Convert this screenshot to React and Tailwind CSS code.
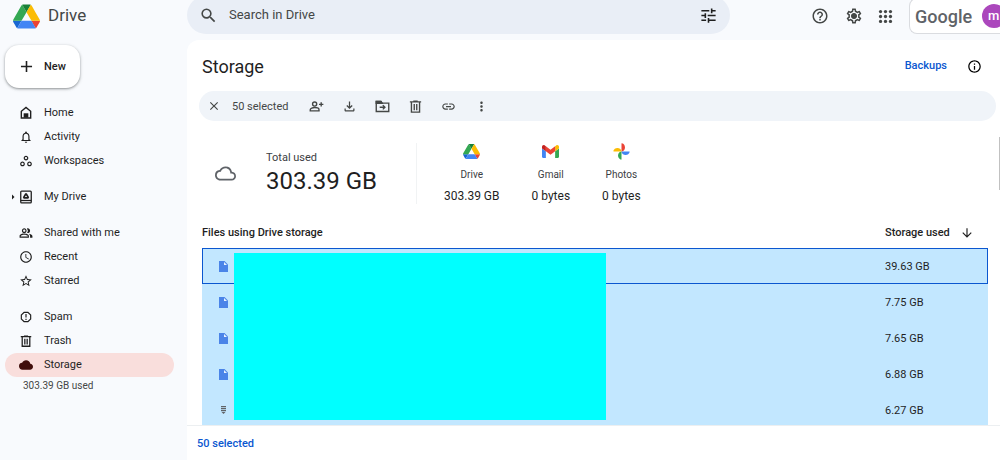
import React, { useState } from 'react';
import {
  MdAccessTime,
  MdAdd,
  MdArrowDownward,
  MdArrowRight,
  MdClose,
  MdCloud,
  MdCloudQueue,
  MdHelpOutline,
  MdInfoOutline,
  MdLink,
  MdMoreVert,
  MdNotificationsNone,
  MdOutlineFileDownload,
  MdOutlinePeopleAlt,
  MdOutlineSettings,
  MdReportGmailerrorred,
  MdSearch,
  MdStarBorder,
  MdTune,
  MdWorkspacesOutline,
} from 'react-icons/md';
import { clsx } from 'clsx';

const DriveLogo = ({ className }) => (
  <svg viewBox="0 0 87.3 78" className={className} aria-hidden="true">
    <path fill="#1967d2" d="m6.6 66.85 3.85 6.65c.8 1.4 1.95 2.5 3.3 3.3l13.75-23.8h-27.5c0 1.55.4 3.1 1.2 4.5z" />
    <path fill="#34a853" d="m43.65 25-13.75-23.8c-1.35.8-2.5 1.9-3.3 3.3l-25.4 44a9.06 9.06 0 0 0 -1.2 4.5h27.5z" />
    <path fill="#ea4335" d="m73.55 76.8c1.35-.8 2.5-1.9 3.3-3.3l1.6-2.75 7.65-13.25c.8-1.4 1.2-2.95 1.2-4.5h-27.502l5.852 11.5z" />
    <path fill="#188038" d="m43.65 25 13.75-23.8c-1.35-.8-2.9-1.2-4.5-1.2h-18.5c-1.6 0-3.15.45-4.5 1.2z" />
    <path fill="#4285f4" d="m59.8 53h-32.3l-13.75 23.8c1.35.8 2.9 1.2 4.5 1.2h50.8c1.6 0 3.15-.45 4.5-1.2z" />
    <path fill="#fbbc04" d="m73.4 26.5-12.7-22c-.8-1.4-1.95-2.5-3.3-3.3l-13.75 23.8 16.15 28h27.45c0-1.55-.4-3.1-1.2-4.5z" />
  </svg>
);

const GmailLogo = ({ className }) => (
  <svg viewBox="52 42 88 66" className={className} aria-hidden="true">
    <path fill="#4285f4" d="M58 108h14V74L52 59v43c0 3.32 2.69 6 6 6" />
    <path fill="#34a853" d="M120 108h14c3.32 0 6-2.69 6-6V59l-20 15" />
    <path fill="#fbbc04" d="M120 48v26l20-15v-8c0-7.42-8.47-11.65-14.4-7.2" />
    <path fill="#ea4335" d="M72 74V48l24 18 24-18v26L96 92" />
    <path fill="#c5221f" d="M52 51v8l20 15V48l-5.6-4.2c-5.94-4.45-14.4-.22-14.4 7.2" />
  </svg>
);

const PhotosLogo = ({ className }) => (
  <svg viewBox="0 0 24 24" className={className} aria-hidden="true">
    <path fill="#ea4335" d="M12.6 0.5a6 6 0 0 1 0 11.5H12V1.1c0-.4.2-.6.6-.6z" />
    <path fill="#4285f4" d="M23.5 12.6a6 6 0 0 1-11.5 0V12h10.9c.4 0 .6.2.6.6z" />
    <path fill="#34a853" d="M11.4 23.5a6 6 0 0 1 0-11.5H12v10.9c0 .4-.2.6-.6.6z" />
    <path fill="#fbbc04" d="M.5 11.4a6 6 0 0 1 11.5 0V12H1.1c-.4 0-.6-.2-.6-.6z" />
  </svg>
);

const HomeIcon = ({ className }) => (
  <svg viewBox="0 0 24 24" className={className} fill="none" stroke="currentColor" strokeWidth="2.4" aria-hidden="true">
    <path d="M4 20.5V9L12 2.5 20 9v11.5z" />
    <path d="M8 12.5h8V20H8z" fill="currentColor" stroke="none" />
  </svg>
);

const MyDriveIcon = ({ className }) => (
  <svg viewBox="0 0 24 24" className={className} fill="none" stroke="currentColor" strokeWidth="2.2" aria-hidden="true">
    <rect x="3" y="2" width="18" height="20" rx="1.5" />
    <path d="M3 18h18" />
    <path d="M10.6 5.5h2.8l4 7-1.4 2.5H8l-1.4-2.5zM12 8.8l-1.8 3.2h3.6z" fill="currentColor" fillRule="evenodd" stroke="none" />
  </svg>
);

const TrashIcon = ({ className }) => (
  <svg viewBox="0 0 24 24" className={className} fill="none" stroke="currentColor" strokeWidth="2.2" aria-hidden="true">
    <path d="M3 4.5h18M8.5 3.5h7M5.5 5v16h13V5M10 8v10M14 8v10" />
  </svg>
);

const AddPersonIcon = ({ className }) => (
  <svg viewBox="0 0 24 24" className={className} fill="none" stroke="currentColor" strokeWidth="2.2" aria-hidden="true">
    <circle cx="9" cy="8" r="3.3" />
    <path d="M2 19v-2c0-2.2 4-3.4 7-3.4s7 1.2 7 3.4v2zM19.5 5v7M16 8.5h7" />
  </svg>
);

const MoveIcon = ({ className }) => (
  <svg viewBox="0 0 24 24" className={className} fill="none" stroke="currentColor" strokeWidth="2.2" aria-hidden="true">
    <path d="M2 4h7.5l2 2.5H22V20H2z" />
    <path d="M2 4h7.5l2 3H2z" fill="currentColor" />
    <path d="M7.5 13.2h8M12.5 9.8l3.4 3.4-3.4 3.4" />
  </svg>
);

const SettingsIcon = ({ className }) => (
  <svg viewBox="0 0 24 24" className={className} fill="currentColor" aria-hidden="true">
    <MdOutlineSettings size={24} />
    <circle cx="12" cy="12" r="3.4" />
  </svg>
);

const AppsIcon = ({ className }) => (
  <svg viewBox="0 0 24 24" className={className} fill="currentColor" aria-hidden="true">
    {[5, 12, 19].map((y) => [5, 12, 19].map((x) => <circle key={`${x}-${y}`} cx={x} cy={y} r="2.3" />))}
  </svg>
);

const FileIcon = ({ className }) => (
  <svg viewBox="0 0 9 11" className={className} aria-hidden="true">
    <path fill="#4a84e8" d="M0 0h5.5L9 3.5V11H0z" />
    <path fill="#e8f3ff" d="M5 1v3h3z" />
  </svg>
);

const ArchiveIcon = ({ className }) => (
  <svg viewBox="0 0 6 8" className={className} aria-hidden="true">
    <path fill="#5f6368" d="M.5 0h5v1.2h-5zM.5 2h5v1.2h-5zM.5 4h5v1.2h-5zM1 6h4L3 8z" />
  </svg>
);

const navGroups = [
  [
    { label: 'Home', icon: HomeIcon },
    { label: 'Activity', icon: MdNotificationsNone },
    { label: 'Workspaces', icon: MdWorkspacesOutline },
  ],
  [{ label: 'My Drive', icon: MyDriveIcon, expandable: true }],
  [
    { label: 'Shared with me', icon: MdOutlinePeopleAlt },
    { label: 'Recent', icon: MdAccessTime },
    { label: 'Starred', icon: MdStarBorder },
  ],
  [
    { label: 'Spam', icon: MdReportGmailerrorred },
    { label: 'Trash', icon: TrashIcon },
    { label: 'Storage', icon: MdCloud },
  ],
];

const actions = [
  { label: 'Share', icon: AddPersonIcon },
  { label: 'Download', icon: MdOutlineFileDownload },
  { label: 'Move', icon: MoveIcon },
  { label: 'Move to trash', icon: TrashIcon },
  { label: 'Copy link', icon: MdLink },
  { label: 'More actions', icon: MdMoreVert },
];

const services = [
  { name: 'Drive', used: '303.39 GB', logo: DriveLogo },
  { name: 'Gmail', used: '0 bytes', logo: GmailLogo },
  { name: 'Photos', used: '0 bytes', logo: PhotosLogo },
];

const files = [
  { id: 1, size: '39.63 GB', icon: FileIcon },
  { id: 2, size: '7.75 GB', icon: FileIcon },
  { id: 3, size: '7.65 GB', icon: FileIcon },
  { id: 4, size: '6.88 GB', icon: FileIcon },
  { id: 5, size: '6.27 GB', icon: ArchiveIcon },
];

const Header = () => (
  <header className="flex h-10 shrink-0 items-start overflow-hidden">
    <a href="#drive" className="flex h-8 w-[187px] shrink-0 items-center gap-2 pl-[13px]">
      <DriveLogo className="h-[25px] w-[27px]" />
      <span className="text-[17px] text-[#444746]">Drive</span>
    </a>
    <div className="-mt-1 flex h-[38px] min-w-0 flex-1 items-center rounded-full bg-[#e9eef6] px-3">
      <button aria-label="Search" className="text-[#444746]">
        <MdSearch className="size-[19px]" />
      </button>
      <input
        type="text"
        aria-label="Search in Drive"
        placeholder="Search in Drive"
        className="ml-[11px] min-w-0 flex-1 bg-transparent text-[13px] outline-none placeholder:text-[#444746]"
      />
      <button aria-label="Search options" className="text-[#1f1f1f]">
        <MdTune className="size-[19px]" />
      </button>
    </div>
    <div className="flex h-8 w-[270px] shrink-0 items-center pl-[81px] text-[#444746]">
      <button aria-label="Support">
        <MdHelpOutline className="size-[18px]" />
      </button>
      <button aria-label="Settings" className="ml-4">
        <SettingsIcon className="size-[18px]" />
      </button>
      <button aria-label="Google apps" className="ml-[14px]">
        <AppsIcon className="size-[17px]" />
      </button>
      <button
        aria-label="Google account"
        className="ml-auto flex h-9 w-[91px] items-center gap-2 overflow-hidden rounded-l-lg border border-r-0 border-[#dadce0] bg-white pl-[5px]"
      >
        <span className="w-[59px] shrink-0 text-left text-[18px] font-medium text-[#5f6368]">Google</span>
        <span className="flex size-6 shrink-0 items-center rounded-full bg-[#ab47bc] pl-[6px] text-[13px] font-medium text-white">
          m
        </span>
      </button>
    </div>
  </header>
);

const Sidebar = ({ active, onSelect }) => (
  <aside className="w-[187px] shrink-0 pt-[5px] pl-[5px] text-[11px] text-[#1f1f1f]">
    <button className="flex h-[43px] items-center gap-2 rounded-[14px] bg-white pr-[14px] pl-3 font-medium shadow-[0_1px_2px_rgba(60,64,67,0.4),0_1px_3px_1px_rgba(60,64,67,0.15)]">
      <MdAdd className="size-[19px]" />
      <span className="pt-[2px]">New</span>
    </button>
    <nav className="mt-[13px] flex flex-col gap-3">
      {navGroups.map((group) => (
        <ul key={group[0].label}>
          {group.map(({ label, icon: Icon, expandable }) => (
            <li key={label}>
              <button
                onClick={() => onSelect(label)}
                className={clsx(
                  'flex h-6 w-[169px] items-center rounded-full',
                  active === label && 'bg-[#f9dedc]'
                )}
              >
                <span className="flex w-[14px] justify-end">
                  {expandable && <MdArrowRight className="size-3 shrink-0" />}
                </span>
                <Icon className={clsx('size-[14px]', active === label && 'text-[#410e0b]')} />
                <span className="ml-[11px]">{label}</span>
              </button>
            </li>
          ))}
        </ul>
      ))}
    </nav>
    <p className="pt-[3px] pl-[18px] text-[10px] leading-3 text-[#444746]">303.39 GB used</p>
  </aside>
);

const SelectionBar = () => (
  <div className="mr-1 ml-3 flex h-[30px] items-center rounded-full bg-[#f0f4f9] pl-2 text-[#444746]">
    <button aria-label="Clear selection">
      <MdClose className="size-[14px]" />
    </button>
    <span className="ml-[11px] w-[68px] pt-[2px] text-[11px] whitespace-nowrap">50 selected</span>
    {actions.map(({ label, icon: Icon }) => (
      <button key={label} aria-label={label} className="flex w-[33px] justify-center">
        <Icon className="size-[15px]" />
      </button>
    ))}
  </div>
);

const Summary = () => (
  <section className="mt-[22px] flex h-[61px] items-center pl-7">
    <MdCloudQueue className="size-[21px] text-[#5f6368]" />
    <div className="-mt-[2px] ml-[30px] w-[150px]">
      <p className="text-[11px] leading-4 text-[#3c4043]">Total used</p>
      <p className="text-[24px] leading-[30px] whitespace-nowrap text-[#1f1f1f]">303.39 GB</p>
    </div>
    <ul className="flex h-full gap-8 border-l border-[#f1f3f4] pl-[27px]">
      {services.map(({ name, used, logo: Logo }) => (
        <li key={name} className="flex flex-col items-center">
          <Logo className="h-[17px] w-[17px]" />
          <span className="mt-[7px] text-[10px] leading-4 text-[#3c4043]">{name}</span>
          <span className="mt-[5px] text-xs leading-4 whitespace-nowrap text-[#1f1f1f]">{used}</span>
        </li>
      ))}
    </ul>
  </section>
);

const FileTable = () => (
  <div className="relative mt-4 mr-3 ml-[15px] min-h-0 flex-1 overflow-hidden">
    <table className="w-full table-fixed border-collapse text-left text-[11px] text-[#1f1f1f]">
      <thead>
        <tr className="h-7 align-top leading-[26px]">
          <th colSpan={2} className="p-0 font-medium">
            Files using Drive storage
          </th>
          <th className="w-[103px] p-0 font-medium">
            <button className="flex items-center gap-[10px] whitespace-nowrap">
              Storage used
              <MdArrowDownward className="size-[14px]" />
            </button>
          </th>
        </tr>
      </thead>
      <tbody className="bg-[#c2e7ff]">
        {files.map(({ id, size, icon: Icon }, index) => (
          <tr
            key={id}
            className={clsx('h-9', index === 0 && 'outline-1 -outline-offset-1 outline-[#0b57d0]')}
          >
            <td className="w-8 p-0 pl-[17px]">
              <Icon className={Icon === FileIcon ? 'h-[11px] w-[9px]' : 'ml-px h-2 w-[7px]'} />
            </td>
            <td className="p-0" />
            <td className="w-[103px] p-0 pt-[2px]">{size}</td>
          </tr>
        ))}
      </tbody>
    </table>
    {/* Covers the file names */}
    <div className="absolute top-[33px] bottom-[5px] left-8 w-[372px] bg-[#00ffff]" />
  </div>
);

export default function App() {
  const [active, setActive] = useState('Storage');

  return (
    <div className="flex h-screen flex-col overflow-hidden bg-[#f8fafd] font-[Roboto,sans-serif]">
      <Header />
      <div className="flex min-h-0 flex-1">
        <Sidebar active={active} onSelect={setActive} />
        <main className="relative flex min-w-0 flex-1 flex-col rounded-tl-xl bg-white">
          <div className="flex h-[51px] shrink-0 items-center justify-between pt-[2px] pr-[18px] pl-[15px]">
            <h1 className="text-[18px] text-[#1f1f1f]">Storage</h1>
            <div className="flex items-center gap-5">
              <a href="#backups" className="text-[11px] font-medium text-[#0b57d0]">
                Backups
              </a>
              <button aria-label="View details">
                <MdInfoOutline className="size-[15px]" />
              </button>
            </div>
          </div>
          <SelectionBar />
          <Summary />
          <FileTable />
          <footer className="flex h-[35px] shrink-0 items-center border-t border-[#eceff1] pt-[3px] pl-[10px] text-[11px] font-medium text-[#0b57d0]">
            50 selected
          </footer>
          {/* Scrollbar thumb at the window edge */}
          <div className="absolute top-[97px] right-0 h-[53px] w-px bg-[#c1c1c1]" />
        </main>
      </div>
    </div>
  );
}
